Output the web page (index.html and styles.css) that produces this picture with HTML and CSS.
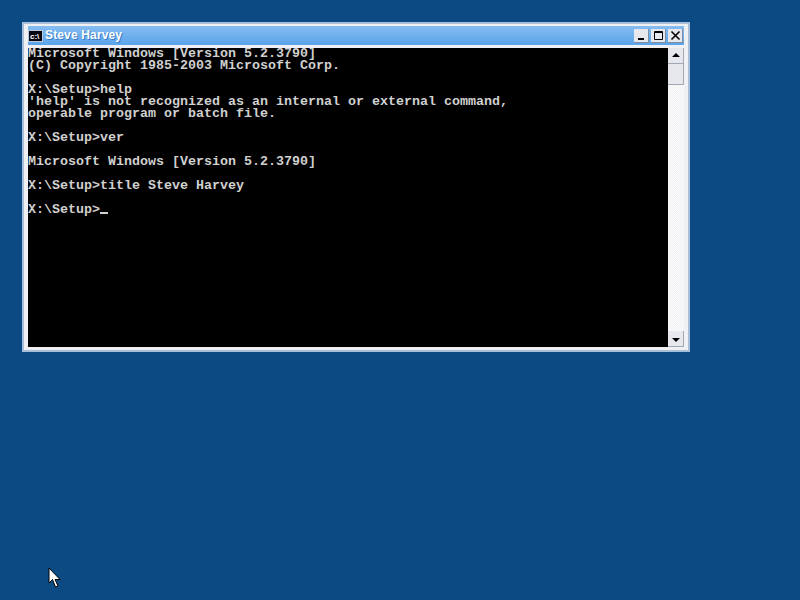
FILE: index.html
```html
<!DOCTYPE html>
<html lang="en">
<head>
<meta charset="utf-8">
<title>Steve Harvey</title>
<link rel="stylesheet" href="styles.css">
</head>
<body>
<div class="window">
  <div class="titlebar">
    <svg class="appicon" width="15" height="12" viewBox="0 0 15 12"><rect width="15" height="12" fill="#b8c8dc"/><rect x="1" y="1" width="13" height="10" fill="#05050f"/><text x="2" y="9" class="icontext">c:\</text></svg>
    <span class="title">Steve Harvey</span>
    <div class="buttons">
      <div class="btn"><svg width="15" height="14" viewBox="0 0 15 14"><rect x="4" y="9" width="6" height="2" fill="#000"/></svg></div>
      <div class="btn"><svg width="15" height="14" viewBox="0 0 15 14"><path d="M3.500 2.500h8v8h-8z M3.500 3.500h8" fill="none" stroke="#000"/></svg></div>
      <div class="btn btn-close"><svg width="15" height="14" viewBox="0 0 15 14"><path d="M3.500 2.500l8 8M11.500 2.500l-8 8" stroke="#000" stroke-width="1.600"/></svg></div>
    </div>
  </div>
  <div class="content">
    <pre class="console">Microsoft Windows [Version 5.2.3790]
(C) Copyright 1985-2003 Microsoft Corp.

X:\Setup&gt;help
'help' is not recognized as an internal or external command,
operable program or batch file.

X:\Setup&gt;ver

Microsoft Windows [Version 5.2.3790]

X:\Setup&gt;title Steve Harvey

X:\Setup&gt;<span class="caret"></span></pre>
    <div class="scrollbar">
      <div class="sbtn"><svg width="16" height="16" viewBox="0 0 16 16"><path d="M8 5l4 4H4z" fill="#000"/></svg></div>
      <div class="thumb"></div>
      <div class="track"></div>
      <div class="sbtn"><svg width="16" height="16" viewBox="0 0 16 16"><path d="M4 7h8l-4 4z" fill="#000"/></svg></div>
    </div>
  </div>
</div>
<svg class="cursor" width="14" height="22" viewBox="0 0 14 22"><path d="M1 1v15l3.500-3.500L7.500 20l2.500-1-3-6.500h5z" fill="#fff" stroke="#000" stroke-width="1"/></svg>
</body>
</html>
```
FILE: styles.css
```css
html, body { margin: 0; height: 100%; }
body {
  background: #0b4a82;
  padding: 22px;
  box-sizing: border-box;
  overflow: hidden;
}
.window {
  width: 668px;
  height: 330px;
  box-sizing: border-box;
  background: #eef0f4;
  border: 2px solid #a8bfd8;
  padding: 2px 4px 3px;
  display: flex;
  flex-direction: column;
}
.titlebar {
  height: 19px;
  flex: none;
  display: flex;
  align-items: center;
  background: linear-gradient(#86bdf0, #5aa3ea);
}
.appicon { flex: none; margin-left: 0; }
.icontext {
  font: bold 8px "Liberation Sans", sans-serif;
  fill: #fff;
}
.title {
  margin-left: 2px;
  color: #fff;
  font: bold 12px/19px "Liberation Sans", sans-serif;
  letter-spacing: 0.15px;
  text-shadow: 1px 1px 0 #3a7cc4;
}
.buttons { margin-left: auto; display: flex; gap: 2px; padding-right: 1px; }
.btn {
  width: 15px;
  height: 14px;
  background: #e6e8ee;
  border-right: 1px solid #7f8ea0;
  border-bottom: 1px solid #7f8ea0;
  box-sizing: border-box;
  display: flex;
}
.btn svg { flex: none; }
.content { display: flex; flex: 1; min-height: 0; margin-top: 3px; }
.console {
  margin: 0;
  flex: 1;
  background: #000;
  color: #d0d0d0;
  font: bold 13.33px/12px "Liberation Mono", monospace;
}
.caret {
  display: inline-block;
  width: 8px;
  height: 2px;
  background: #d0d0d0;
  vertical-align: -1px;
}
.scrollbar { width: 16px; flex: none; display: flex; flex-direction: column; }
.sbtn {
  height: 16px;
  flex: none;
  background: #e6e8ee;
  border-right: 1px solid #a0a8b4;
  border-bottom: 1px solid #a0a8b4;
  box-sizing: border-box;
}
.thumb {
  height: 21px;
  flex: none;
  background: #e6e8ee;
  border-right: 1px solid #a0a8b4;
  border-bottom: 1px solid #a0a8b4;
  box-sizing: border-box;
}
.track {
  flex: 1;
  background: repeating-conic-gradient(#fff 0 25%, #eceef2 0 50%) 0 0 / 2px 2px;
}
.cursor { position: absolute; left: 48px; top: 567px; }
```
